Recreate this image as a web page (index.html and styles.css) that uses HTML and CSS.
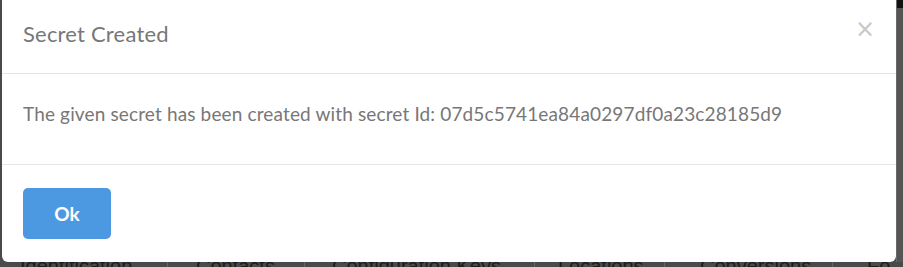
FILE: index.html
```html
<!DOCTYPE html>
<html>
<head>
<meta charset="utf-8">
<link rel="stylesheet" href="styles.css">
</head>
<body>
<div class="page">
  <div class="modal">
    <div class="modal-header">
      <h4 class="modal-title">Secret Created</h4>
      <span class="close">&times;</span>
    </div>
    <div class="modal-body">The given secret has been created with secret Id: 07d5c5741ea84a0297df0a23c28185d9</div>
    <div class="modal-footer">
      <button class="btn">Ok</button>
    </div>
  </div>
  <div class="scrollbar"><div class="thumb"></div></div>
</div>
<div class="tabs">
  <span class="tab t1">Identification</span>
  <span class="tab t2">Contacts</span>
  <span class="tab t3">Configuration Keys</span>
  <span class="tab t4">Locations</span>
  <span class="tab t5">Conversions</span>
  <span class="tab t6">Fo</span>
</div>
</body>
</html>
```
FILE: styles.css
```css
html, body { margin: 0; padding: 0; }
body {
  background: #4a4a4a;
  width: 903px;
  height: 267px;
  overflow: hidden;
  font-family: Lato, "Open Sans", sans-serif;
}
.page {
  display: flex;
  padding-left: 2px;
}
.modal {
  width: 895px;
  height: 262px;
  background: #fff;
  border-radius: 0 0 6px 6px;
  display: flex;
  flex-direction: column;
  color: #777;
}
.scrollbar {
  width: 6px;
  background: #555;
  border-left: 1px solid #6a6a6a;
}
.thumb { height: 8px; background: #111; }
.modal-header {
  height: 74px;
  box-sizing: border-box;
  border-bottom: 1px solid #e5e5e5;
  display: flex;
  align-items: center;
  justify-content: space-between;
  padding: 0 21px 0 21px;
}
.modal-title {
  margin: 0;
  font-size: 22px;
  font-weight: 400;
  letter-spacing: 0.2px;
  color: #777;
  padding-bottom: 6px;
}
.close {
  font-size: 24px;
  color: #c8c8c8;
  line-height: 1;
  font-family: "DejaVu Sans", sans-serif;
  padding-bottom: 14px;
}
.modal-body {
  height: 92px;
  box-sizing: border-box;
  border-bottom: 1px solid #e5e5e5;
  display: flex;
  align-items: center;
  padding: 0 21px 11px;
  font-size: 19px;
  letter-spacing: 0.14px;
}
.modal-footer {
  flex: 1;
  display: flex;
  align-items: flex-start;
  padding: 23px 21px;
}
.btn {
  width: 88px;
  height: 51px;
  border: 0;
  border-radius: 5px;
  background: #4d99e1;
  color: #fff;
  font-family: inherit;
  font-size: 19px;
  font-weight: 700;
}
.tabs {
  display: flex;
  height: 5px;
  overflow: hidden;
  font-family: "Liberation Sans", sans-serif;
  font-size: 20px;
  line-height: 8px;
  color: #1c1c1c;
  white-space: nowrap;
}
.tab { border-right: 1px solid #666; box-sizing: border-box; }
.t1 { width: 168px; padding-left: 20px; }
.t2 { width: 137px; padding-left: 28px; }
.t3 { width: 230px; padding-left: 27px; }
.t4 { width: 130px; padding-left: 23px; }
.t5 { width: 168px; padding-left: 35px; }
.t6 { padding-left: 34px; border: 0; }
```
